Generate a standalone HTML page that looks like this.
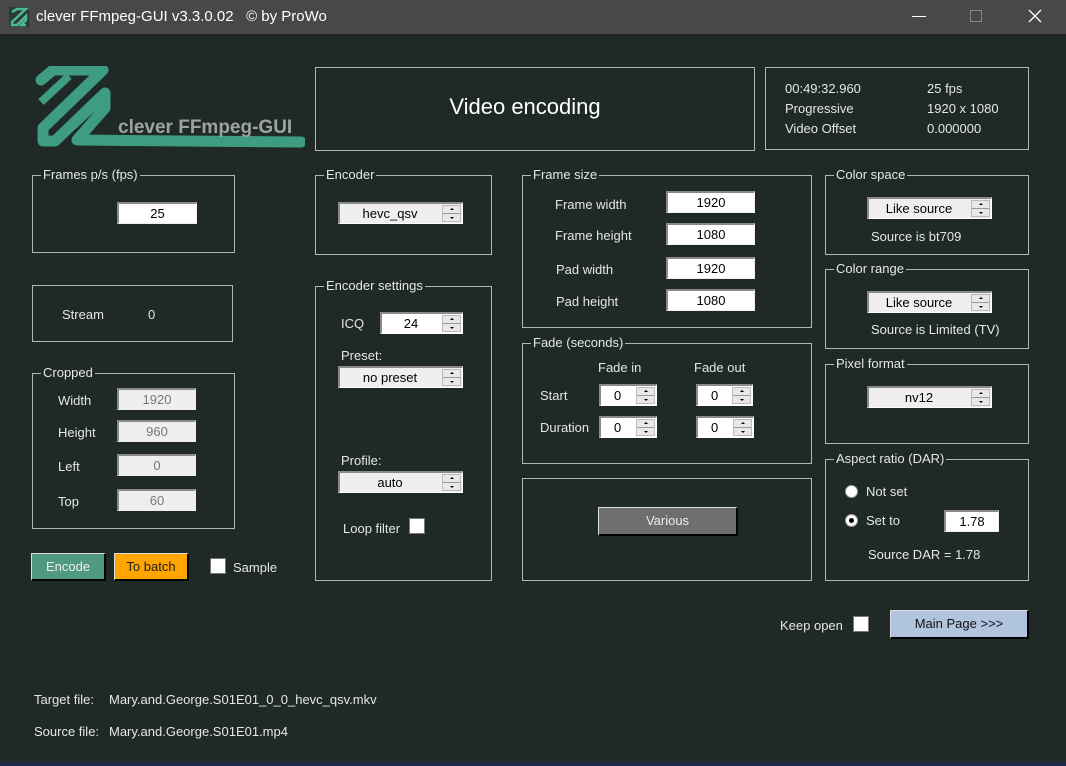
<!DOCTYPE html>
<html><head><meta charset="utf-8"><style>
*{margin:0;padding:0;box-sizing:border-box}
body{width:1066px;height:766px;background:#1f2a27;font-family:"Liberation Sans",Arial,sans-serif;font-size:13px;color:#e6e6e6;position:relative;overflow:hidden}
.a{position:absolute}
.tb{position:absolute;left:0;top:0;width:1066px;height:34px;background:#484848;color:#fff;font-size:15px}
.g{position:absolute;border:1px solid #a8bcb4}
.g>.l{position:absolute;top:-9px;left:8px;background:#1f2a27;padding:0 2px;line-height:16px;white-space:nowrap}
.in{position:absolute;background:#fff;color:#000;text-align:center;border-top:2px solid #8a8a8a;border-left:2px solid #8a8a8a;border-bottom:1px solid #eee;border-right:1px solid #eee;line-height:19px;font-size:13px}
.dis{background:#efefef;color:#777}
.cb{position:absolute;background:#efefef;color:#000;border-top:2px solid #8a8a8a;border-left:2px solid #8a8a8a;border-bottom:1px solid #fff;border-right:1px solid #fff;line-height:19px;font-size:13px}
.cb.w{background:#fff}
.cb .t{position:absolute;left:0;right:22px;top:0;text-align:center}
.cb .s{position:absolute;right:1px;top:1px;width:19px;bottom:1px;background:#e8e8e8;border:1px solid #bbb}
.cb .s:before{content:"";position:absolute;left:7px;top:2px;border-left:2px solid transparent;border-right:2px solid transparent;border-bottom:2px solid #000}
.cb .s:after{content:"";position:absolute;left:0;right:0;top:7px;height:1px;background:#999}
.cb .s i{position:absolute;left:7px;bottom:2px;border-left:2px solid transparent;border-right:2px solid transparent;border-top:2px solid #000}
.chk{position:absolute;width:16px;height:16px;background:#fff;border:1px solid #777}
.rad{position:absolute;width:13px;height:13px;border-radius:50%;background:#fff;border:1px solid #999}
.btn{position:absolute;text-align:center;border-top:1px solid #ddd;border-left:1px solid #ddd;border-right:2px solid #000;border-bottom:2px solid #000;font-size:13px}
</style></head><body>
<div class="tb">
 <svg class="a" style="left:9px;top:7px" width="20" height="20"><rect width="20" height="20" fill="#2a3a36"/><path d="M3,5 L8,2 L17,2 L3,15 L3,18 L8,18 L17,9 L17,13 L12,18 L17,18" stroke="#4fb895" stroke-width="2.5" fill="none"/></svg>
 <div class="a" style="left:36px;top:8px">clever FFmpeg-GUI v3.3.0.02&nbsp;&nbsp;&nbsp;© by ProWo</div>
 <div class="a" style="left:912px;top:16px;width:14px;height:1px;background:#fff"></div>
 <div class="a" style="left:970px;top:10px;width:12px;height:12px;border:1px solid #888"></div>
 <svg class="a" style="left:1028px;top:9px" width="14" height="14"><path d="M1,1L13,13M13,1L1,13" stroke="#fff" stroke-width="1.3"/></svg>
</div>
<!-- logo -->
<svg class="a" style="left:33px;top:66px" width="272" height="86">
 <path d="M8,14 L20,4 L70,4 L10,62 L10,75 L22,75 L72,27 L72,42 L44,74 L268,76" stroke="#3e9c82" stroke-width="11" fill="none" stroke-linejoin="round" stroke-linecap="round"/>
 <path d="M8,36 L36,10 M40,60 L66,36" stroke="#3e9c82" stroke-width="8" fill="none"/>
 <text x="85" y="67" font-family="Liberation Sans" font-weight="bold" font-size="19" fill="#9ea3a2">clever FFmpeg-GUI</text>
</svg>
<div class="g" style="left:315px;top:67px;width:440px;height:84px"></div>
<div class="a" style="left:305px;top:94px;width:440px;text-align:center;font-size:22px;color:#fff">Video encoding</div>
<div class="g" style="left:765px;top:67px;width:264px;height:83px"></div>
<div class="a" style="left:785px;top:79px;line-height:20px">00:49:32.960<br>Progressive<br>Video Offset</div>
<div class="a" style="left:927px;top:79px;line-height:20px">25 fps<br>1920 x 1080<br>0.000000</div>

<div class="g" style="left:32px;top:175px;width:203px;height:78px"><span class="l">Frames p/s (fps)</span></div>
<div class="in" style="left:117px;top:202px;width:80px;height:22px">25</div>
<div class="g" style="left:32px;top:285px;width:201px;height:57px"></div>
<div class="a" style="left:62px;top:307px">Stream</div><div class="a" style="left:148px;top:307px">0</div>
<div class="g" style="left:32px;top:373px;width:203px;height:156px"><span class="l">Cropped</span></div>
<div class="a" style="left:58px;top:393px">Width</div><div class="in dis" style="left:117px;top:388px;width:79px;height:22px">1920</div>
<div class="a" style="left:58px;top:425px">Height</div><div class="in dis" style="left:117px;top:420px;width:79px;height:22px">960</div>
<div class="a" style="left:58px;top:459px">Left</div><div class="in dis" style="left:117px;top:454px;width:79px;height:22px">0</div>
<div class="a" style="left:58px;top:494px">Top</div><div class="in dis" style="left:117px;top:489px;width:79px;height:22px">60</div>
<div class="btn" style="left:31px;top:553px;width:75px;height:28px;line-height:25px;background:#4f9a80;color:#eee">Encode</div>
<div class="btn" style="left:114px;top:553px;width:75px;height:28px;line-height:25px;background:#ffa500;color:#222">To batch</div>
<div class="chk" style="left:210px;top:558px"></div><div class="a" style="left:233px;top:560px">Sample</div>

<div class="g" style="left:315px;top:175px;width:177px;height:80px"><span class="l">Encoder</span></div>
<div class="cb" style="left:338px;top:202px;width:125px;height:22px"><span class="t">hevc_qsv</span><span class="s"><i></i></span></div>
<div class="g" style="left:315px;top:286px;width:177px;height:295px"><span class="l">Encoder settings</span></div>
<div class="a" style="left:341px;top:316px">ICQ</div>
<div class="cb w" style="left:380px;top:312px;width:83px;height:22px"><span class="t">24</span><span class="s"><i></i></span></div>
<div class="a" style="left:341px;top:348px">Preset:</div>
<div class="cb" style="left:338px;top:366px;width:125px;height:22px"><span class="t">no preset</span><span class="s"><i></i></span></div>
<div class="a" style="left:341px;top:453px">Profile:</div>
<div class="cb" style="left:338px;top:471px;width:125px;height:22px"><span class="t">auto</span><span class="s"><i></i></span></div>
<div class="a" style="left:343px;top:521px">Loop filter</div><div class="chk" style="left:409px;top:518px"></div>

<div class="g" style="left:522px;top:175px;width:290px;height:153px"><span class="l" style="left:8px">Frame size</span></div>
<div class="a" style="left:555px;top:197px">Frame width</div><div class="in" style="left:666px;top:191px;width:89px;height:22px">1920</div>
<div class="a" style="left:555px;top:228px">Frame height</div><div class="in" style="left:666px;top:223px;width:89px;height:22px">1080</div>
<div class="a" style="left:556px;top:262px">Pad width</div><div class="in" style="left:666px;top:257px;width:89px;height:22px">1920</div>
<div class="a" style="left:556px;top:294px">Pad height</div><div class="in" style="left:666px;top:289px;width:89px;height:22px">1080</div>
<div class="g" style="left:522px;top:343px;width:290px;height:121px"><span class="l" style="left:8px">Fade (seconds)</span></div>
<div class="a" style="left:598px;top:360px">Fade in</div><div class="a" style="left:694px;top:360px">Fade out</div>
<div class="a" style="left:540px;top:388px">Start</div>
<div class="cb w" style="left:599px;top:384px;width:58px;height:22px"><span class="t" style="text-align:left;left:13px">0</span><span class="s"><i></i></span></div>
<div class="cb w" style="left:696px;top:384px;width:57px;height:22px"><span class="t" style="text-align:left;left:13px">0</span><span class="s"><i></i></span></div>
<div class="a" style="left:540px;top:420px">Duration</div>
<div class="cb w" style="left:599px;top:416px;width:58px;height:22px"><span class="t" style="text-align:left;left:13px">0</span><span class="s"><i></i></span></div>
<div class="cb w" style="left:696px;top:416px;width:58px;height:22px"><span class="t" style="text-align:left;left:13px">0</span><span class="s"><i></i></span></div>
<div class="g" style="left:522px;top:478px;width:290px;height:103px"></div>
<div class="btn" style="left:598px;top:507px;width:140px;height:29px;line-height:26px;background:#6e6e6e;color:#eee">Various</div>

<div class="g" style="left:825px;top:175px;width:204px;height:80px"><span class="l">Color space</span></div>
<div class="cb" style="left:867px;top:197px;width:125px;height:22px"><span class="t">Like source</span><span class="s"><i></i></span></div>
<div class="a" style="left:871px;top:229px">Source is bt709</div>
<div class="g" style="left:825px;top:269px;width:204px;height:80px"><span class="l">Color range</span></div>
<div class="cb" style="left:867px;top:291px;width:125px;height:22px"><span class="t">Like source</span><span class="s"><i></i></span></div>
<div class="a" style="left:871px;top:322px">Source is Limited (TV)</div>
<div class="g" style="left:825px;top:364px;width:204px;height:80px"><span class="l">Pixel format</span></div>
<div class="cb" style="left:867px;top:386px;width:125px;height:22px"><span class="t">nv12</span><span class="s"><i></i></span></div>
<div class="g" style="left:825px;top:459px;width:204px;height:122px"><span class="l">Aspect ratio (DAR)</span></div>
<div class="rad" style="left:845px;top:485px"></div><div class="a" style="left:866px;top:484px">Not set</div>
<div class="rad" style="left:845px;top:514px"><div class="a" style="left:3px;top:3px;width:5px;height:5px;border-radius:50%;background:#000"></div></div>
<div class="a" style="left:866px;top:513px">Set to</div>
<div class="in" style="left:944px;top:510px;width:55px;height:22px">1.78</div>
<div class="a" style="left:868px;top:547px">Source DAR = 1.78</div>

<div class="a" style="left:780px;top:618px">Keep open</div><div class="chk" style="left:853px;top:616px"></div>
<div class="btn" style="left:890px;top:610px;width:139px;height:29px;line-height:26px;background:#b0c4de;color:#111">Main Page &gt;&gt;&gt;</div>

<div class="a" style="left:34px;top:692px">Target file:</div><div class="a" style="left:109px;top:692px">Mary.and.George.S01E01_0_0_hevc_qsv.mkv</div>
<div class="a" style="left:34px;top:724px">Source file:</div><div class="a" style="left:109px;top:724px">Mary.and.George.S01E01.mp4</div>
<div class="a" style="left:0;top:762px;width:1066px;height:4px;background:#1a2a44"></div>
</body></html>
